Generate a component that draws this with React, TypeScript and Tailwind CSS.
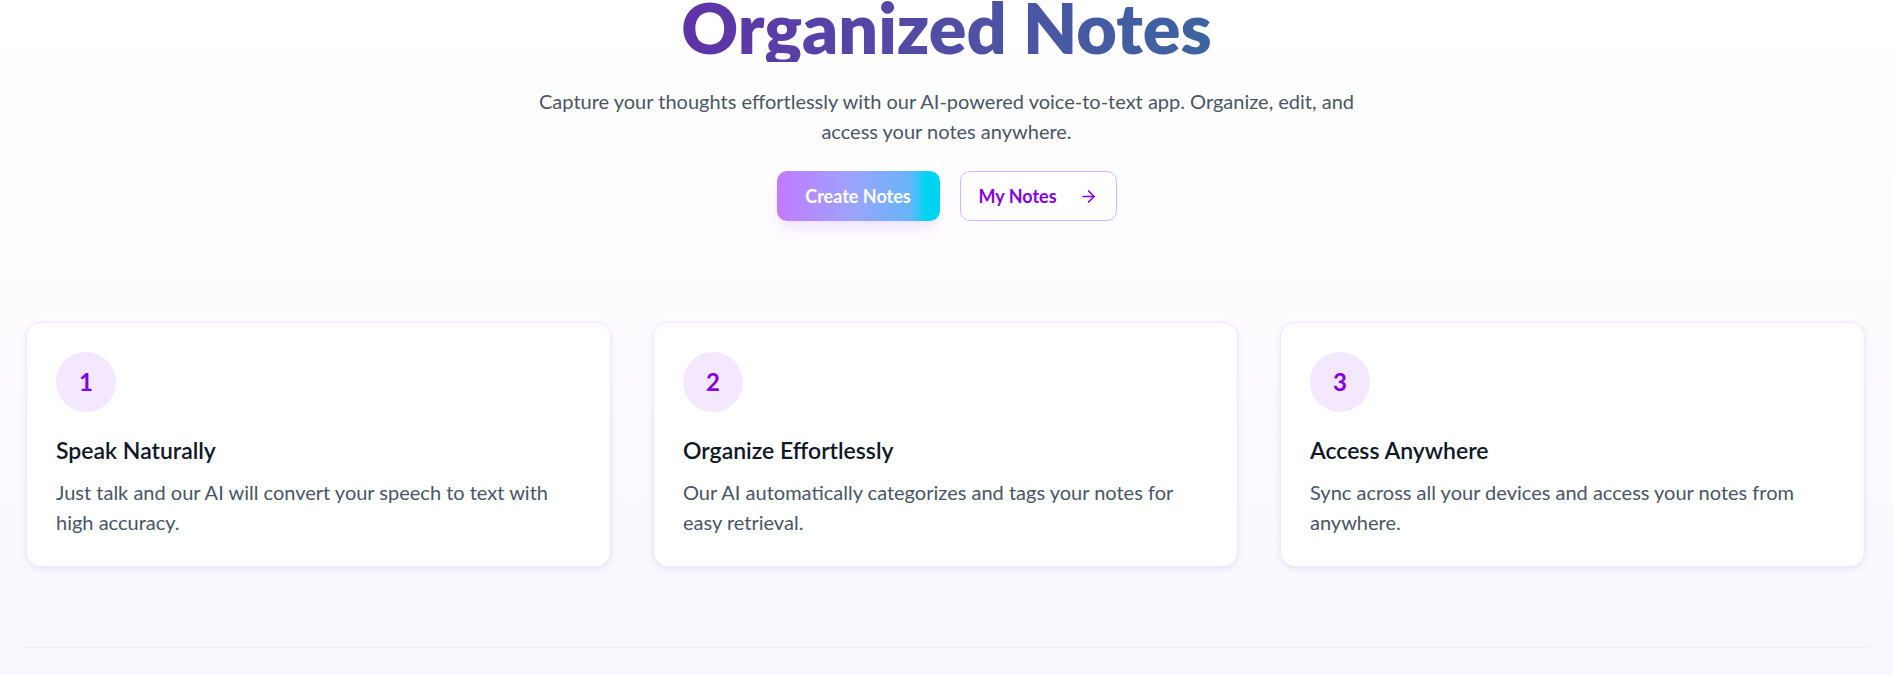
import { ArrowRight } from 'lucide-react'

const steps = [
  {
    n: 1,
    title: 'Speak Naturally',
    text: 'Just talk and our AI will convert your speech to text with high accuracy.',
  },
  {
    n: 2,
    title: 'Organize Effortlessly',
    text: 'Our AI automatically categorizes and tags your notes for easy retrieval.',
  },
  {
    n: 3,
    title: 'Access Anywhere',
    text: 'Sync across all your devices and access your notes from anywhere.',
  },
]

export default function App() {
  return (
    <div
      className="min-h-screen overflow-hidden bg-gradient-to-b from-white to-[#f9f6fe]"
      style={{ fontFamily: 'Lato, "Open Sans", sans-serif' }}
    >
      {/* Hero */}
      <section className="flex flex-col items-center text-center">
        <h1 className="-mt-[8px] text-[70px] leading-[70px] font-extrabold bg-gradient-to-r from-[#5e32a8] to-[#3a64a0] bg-clip-text text-transparent">
          Organized Notes
        </h1>
        <p className="mt-[24px] max-w-[850px] text-[20px] leading-[30px] text-gray-600">
          Capture your thoughts effortlessly with our AI-powered voice-to-text app. Organize, edit, and access your
          notes anywhere.
        </p>
        <div className="mt-[25px] flex items-center gap-5">
          <button className="h-[50px] w-[163px] rounded-[10px] bg-[linear-gradient(to_right,#c27aff_0%,#9ea2fd_45%,#66b6fb_82%,#00d3f2_91%)] text-[18px] font-bold text-white shadow-lg shadow-purple-200/60">
            Create Notes
          </button>
          <button className="flex h-[50px] w-[157px] items-center justify-center gap-[22px] rounded-[10px] border border-purple-300 bg-white text-[18px] font-bold text-purple-700">
            My Notes
            <ArrowRight size={19} strokeWidth={2} />
          </button>
        </div>
      </section>

      {/* Steps */}
      <section className="mt-[101px] grid grid-cols-3 gap-[42px] pl-[26px] pr-[28px]">
        {steps.map((s) => (
          <div
            key={s.n}
            className="rounded-[15px] border border-purple-100 bg-white p-[29px] shadow-[0_2px_6px_rgba(110,80,170,0.13)]"
          >
            <div className="flex h-[60px] w-[60px] items-center justify-center rounded-full bg-purple-100 text-[24px] font-bold text-purple-700">
              {s.n}
            </div>
            <h3 className="mt-[23px] text-[23px] leading-[30px] font-semibold text-gray-900">{s.title}</h3>
            <p className="mt-[12px] text-[20px] leading-[30px] text-gray-600">{s.text}</p>
          </div>
        ))}
      </section>

      {/* Footer divider */}
      <footer className="mx-6 mt-20 border-t border-purple-100 pt-10 pb-20" />
    </div>
  )
}
